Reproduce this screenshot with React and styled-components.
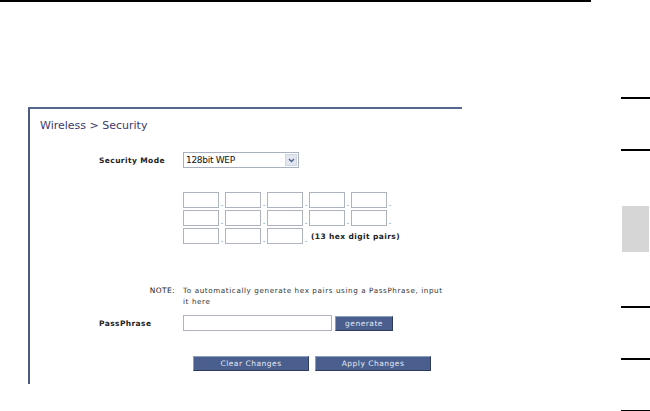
import React from 'react';
import styled, { createGlobalStyle } from 'styled-components';

const GlobalStyle = createGlobalStyle`
  * { box-sizing: border-box; }
  body {
    margin: 0;
    background: #fff;
    font-family: "DejaVu Sans", Verdana, sans-serif;
  }
`;

const StyledPage = styled.div`
  width: 650px;
  height: 411px;
  display: flex;
  overflow: hidden;
`;

const StyledMain = styled.div`
  width: 621px;
  display: flex;
  flex-direction: column;
`;

const StyledRule = styled.div`
  width: 591px;
  height: 2px;
  background: #000;
`;

const StyledPanel = styled.div`
  margin: 105px 0 0 28px;
  width: 434px;
  height: 277px;
  border-top: 2px solid #56688f;
  border-left: 2px solid #4b5a85;
  padding: 10px 0 0 10px;
`;

const StyledTitle = styled.h2`
  margin: 0;
  font-size: 11px;
  line-height: 13px;
  font-weight: 400;
  color: #3c3a6b;
`;

const StyledForm = styled.div`
  margin: 20px 0 0 59px;
  display: flex;
  flex-direction: column;
`;

const StyledRow = styled.div`
  display: flex;
  align-items: ${(p) => (p.$top ? 'flex-start' : 'center')};
  margin-top: ${(p) => p.$gap || 0}px;
`;

const StyledLabel = styled.div`
  width: 84px;
  flex: none;
  font-size: 7.5px;
  letter-spacing: 0.4px;
  color: #222;
  text-align: ${(p) => (p.$right ? 'right' : 'left')};
  padding-right: ${(p) => (p.$right ? 8 : 0)}px;
  font-weight: ${(p) => (p.$normal ? 400 : 700)};
`;

const StyledSelect = styled.div`
  width: 116px;
  height: 16px;
  border: 1px solid #a8b0c0;
  display: flex;
  align-items: center;
  justify-content: space-between;
  font-size: 9px;
  letter-spacing: -0.3px;
  color: #111;
  padding-left: 2px;
`;

const StyledArrow = styled.div`
  width: 12px;
  height: 12px;
  margin-right: 1px;
  background: #e2e6f0;
  border: 1px solid #cfd5e2;
  display: flex;
  align-items: center;
  justify-content: center;
`;

const StyledKeys = styled.div`
  margin: 24px 0 0 84px;
  display: flex;
  flex-direction: column;
  gap: 2px;
`;

const StyledKeyRow = styled.div`
  display: flex;
  height: 16px;
  align-items: flex-end;
`;

const StyledBox = styled.div`
  width: 36px;
  height: 16px;
  border: 1px solid #aeb3c0;
  background: #fff;
`;

const StyledDot = styled.span`
  width: 6px;
  font-size: 8px;
  line-height: 8px;
  text-align: center;
  color: #777;
`;

const StyledHint = styled.span`
  align-self: center;
  margin-left: 2px;
  font-size: 7.5px;
  font-weight: 700;
  letter-spacing: 0.4px;
  color: #222;
`;

const StyledNote = styled.div`
  width: 262px;
  font-size: 7.2px;
  line-height: 10.5px;
  letter-spacing: 0.6px;
  color: #333;
`;

const StyledInput = styled.div`
  width: 149px;
  height: 16px;
  border: 1px solid #aeb3c0;
`;

const StyledButton = styled.div`
  width: ${(p) => p.$w}px;
  height: 15px;
  margin-left: ${(p) => p.$ml || 0}px;
  background: #4a5f8e;
  border: 1px solid;
  border-color: #8d9cc0 #2e3b5e #2e3b5e #8d9cc0;
  color: #e4e9f3;
  font-size: 7.5px;
  letter-spacing: 0.5px;
  display: flex;
  align-items: center;
  justify-content: center;
`;

const StyledSide = styled.div`
  width: 29px;
  padding-top: 97px;
  display: flex;
  flex-direction: column;
`;

const StyledTab = styled.div`
  flex: none;
  height: ${(p) => p.$h || 52}px;
  border-top: 2px solid ${(p) => (p.$lined ? '#000' : 'transparent')};
  padding: 3px 0 0 1px;
`;

const StyledTabFill = styled.div`
  width: 27px;
  height: 46px;
  background: #d6d6d6;
`;

const hexRows = [5, 5, 3];

const App = () => {
  return (
    <StyledPage>
      <GlobalStyle />
      <StyledMain>
        <StyledRule />
        <StyledPanel>
          <StyledTitle>Wireless &gt; Security</StyledTitle>
          <StyledForm>
            <StyledRow>
              <StyledLabel>Security Mode</StyledLabel>
              <StyledSelect>
                128bit WEP
                <StyledArrow>
                  <svg width="7" height="5" viewBox="0 0 7 5">
                    <path d="M1 1 L3.5 3.5 L6 1" fill="none" stroke="#4d6185" strokeWidth="1.4" />
                  </svg>
                </StyledArrow>
              </StyledSelect>
            </StyledRow>
            <StyledKeys>
              {hexRows.map((count, r) => (
                <StyledKeyRow key={r}>
                  {Array.from({ length: count }).map((_, i) => (
                    <React.Fragment key={i}>
                      <StyledBox />
                      <StyledDot>.</StyledDot>
                    </React.Fragment>
                  ))}
                  {r === 2 && <StyledHint>(13 hex digit pairs)</StyledHint>}
                </StyledKeyRow>
              ))}
            </StyledKeys>
            <StyledRow $top $gap={42}>
              <StyledLabel $right $normal>NOTE:</StyledLabel>
              <StyledNote>
                To automatically generate hex pairs using a PassPhrase, input it here
              </StyledNote>
            </StyledRow>
            <StyledRow $gap={8}>
              <StyledLabel>PassPhrase</StyledLabel>
              <StyledInput />
              <StyledButton $w={58} $ml={3}>generate</StyledButton>
            </StyledRow>
            <StyledRow $gap={25}>
              <StyledButton $w={116} $ml={94}>Clear Changes</StyledButton>
              <StyledButton $w={116} $ml={6}>Apply Changes</StyledButton>
            </StyledRow>
          </StyledForm>
        </StyledPanel>
      </StyledMain>
      <StyledSide>
        <StyledTab $lined />
        <StyledTab $lined />
        <StyledTab>
          <StyledTabFill />
        </StyledTab>
        <StyledTab $h={53} />
        <StyledTab $lined />
        <StyledTab $lined />
        <StyledTab $lined />
      </StyledSide>
    </StyledPage>
  );
};

export default App;
